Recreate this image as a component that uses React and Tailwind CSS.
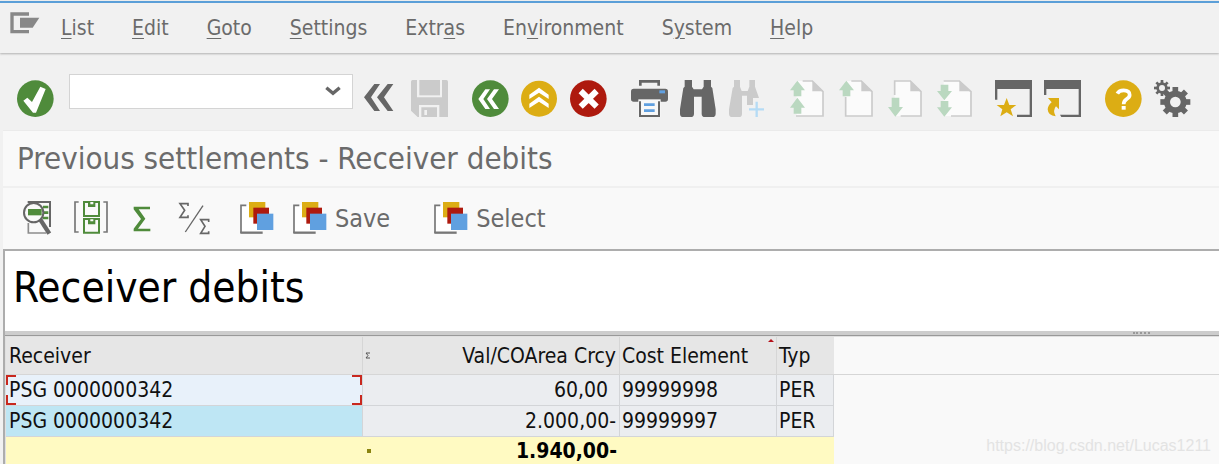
import { clsx } from 'clsx';

const MENU = [
    ['', 'L', 'ist'],
    ['', 'E', 'dit'],
    ['', 'G', 'oto'],
    ['', 'S', 'ettings'],
    ['Extr', 'a', 's'],
    ['En', 'v', 'ironment'],
    ['S', 'y', 'stem'],
    ['', 'H', 'elp'],
];

const ROWS = [
    { receiver: 'PSG 0000000342', value: '60,00', negative: false, element: '99999998', type: 'PER' },
    { receiver: 'PSG 0000000342', value: '2.000,00', negative: true, element: '99999997', type: 'PER' },
];

const GREEN = '#4f8b3b';
const AMBER = '#dcad14';
const RED = '#ae1a0e';
const DARK = '#666666';
const PALE = '#cbcbcb';
const BLUE = '#60a0e0';

// toolbar icons are drawn on a 111 unit grid
function Icon({ children }) {
    return (
        <svg viewBox="0 0 111 111" className="block size-[37px]" aria-hidden="true">
            {children}
        </svg>
    );
}

function SmallIcon({ children }) {
    return (
        <svg viewBox="0 0 105 105" className="block size-[35px] shrink-0" aria-hidden="true">
            {children}
        </svg>
    );
}

const AcceptIcon = () => (
    <Icon>
        <circle cx="55" cy="56" r="55" fill={GREEN} />
        <path d="M19 62L31 53L45 66L70 20L86 27L57 98H48Z" fill="#fff" />
    </Icon>
);

const CollapseIcon = () => (
    <Icon>
        <path d="M0 52L31 12H48L21 52L48 93H31ZM39 52L71 12H88L60 52L88 93H71Z" fill={DARK} />
    </Icon>
);

const SaveIcon = () => (
    <Icon>
        <path d="M5 0H18V52H93V0H106Q111 0 111 5V111H85V75H24V111H20L0 92V5Q0 0 5 0Z" fill={PALE} />
        <path d="M25 0H87V46H25Z" fill={PALE} />
        <path d="M31 82H78V111H31ZM40 90V105H48V90Z" fill={PALE} fillRule="evenodd" />
    </Icon>
);

const BackIcon = () => (
    <Icon>
        <circle cx="55" cy="56" r="55" fill={GREEN} />
        <path d="M19 57L40 28H54L34 57L54 87H40ZM45 57L66 28H81L60 57L81 87H66Z" fill="#fff" />
    </Icon>
);

const ExitIcon = () => (
    <Icon>
        <circle cx="54" cy="56" r="54" fill={AMBER} />
        <path d="M54 23L83 44V57L54 38L25 57V44ZM54 50L83 71V84L54 65L25 84V71Z" fill="#fff" />
    </Icon>
);

const CancelIcon = () => (
    <Icon>
        <circle cx="55" cy="56" r="55" fill={RED} />
        <path d="M32 33L80 80M80 33L32 80" stroke="#fff" strokeWidth="18" />
    </Icon>
);

const PrintIcon = () => (
    <Icon>
        <path d="M28 17V4H83V17" fill="none" stroke={DARK} strokeWidth="8" />
        <rect y="26" width="111" height="39" rx="8" fill={DARK} />
        <rect x="85" y="31" width="17" height="9" fill={BLUE} />
        <path d="M22 58H89V111H22Z" fill="#f8f8f8" />
        <path d="M27 64V108H84V64" fill="none" stroke={DARK} strokeWidth="6" />
        <path d="M39 74H71M39 92H71" stroke={BLUE} strokeWidth="8" />
    </Icon>
);

const FindIcon = () => (
    <Icon>
        <path
            d="M14 0H36V20L41 28H66L71 20V0H93V20L97 24L107 88V101Q107 111 97 111H75Q65 111 65 101V50H42V101Q42 111 32 111H10Q0 111 0 101V88L10 24L14 20Z"
            fill={DARK}
        />
    </Icon>
);

const FindNextIcon = () => (
    <Icon>
        <path
            d="M15 0H33V20L38 33H56L61 20V0H78V20L90 54H72V75H54V47H39V101Q39 111 30 111H10Q0 111 0 101V88L11 24L15 20Z"
            fill={PALE}
        />
        <path d="M83 65V111M60 88H105" stroke="#b5dbf5" strokeWidth="7" />
    </Icon>
);

function PageIcon({ outline, arrows }) {
    return (
        <svg viewBox="0 0 102 111" className="block h-[37px] w-[34px] overflow-visible" aria-hidden="true">
            <path d="M20 3H67L99 35V108H20Z" fill="#fbfbfb" />
            <path d={outline} fill="none" stroke={PALE} strokeWidth="5" />
            <path d="M67 2V34H100Z" fill={PALE} />
            {arrows.map(d => (
                <path key={d} d={d} fill="#bad8c0" />
            ))}
        </svg>
    );
}

const FirstPageIcon = () => (
    <PageIcon
        outline="M38 3H67L99 35V108H18"
        arrows={['M22 2L45 31H34V49H11V31H0Z', 'M22 53L45 83H34V101H11V83H0Z']}
    />
);
const PrevPageIcon = () => (
    <PageIcon outline="M37 3H67L99 35V108H20V51" arrows={['M22 2L45 31H34V49H11V31H0Z']} />
);
const NextPageIcon = () => (
    <PageIcon outline="M20 45V3H67L99 35V108H38" arrows={['M22 110L45 81H34V53H11V81H0Z']} />
);
const LastPageIcon = () => (
    <PageIcon
        outline="M20 3H67L102 35V108H42"
        arrows={['M22 61L45 33H34V14H11V33H0Z', 'M22 110L45 82H34V63H11V82H0Z']}
    />
);

const NewSessionIcon = () => (
    <Icon>
        <path d="M0 0H111V111H66V104H104V27H7V59H0Z" fill={DARK} />
        <path d="M35 54L43 75H64L47 88L54 109L35 97L16 109L22 88L5 75H27Z" fill={AMBER} />
    </Icon>
);

const ShortcutIcon = () => (
    <Icon>
        <path d="M0 0H111V111H52L48 104H104V27H7V45H0Z" fill={DARK} />
        <path d="M12 54H45V88L36 79Q25 92 35 109Q12 107 11 88Q12 76 23 67Z" fill={AMBER} />
    </Icon>
);

const HelpIcon = () => (
    <Icon>
        <circle cx="55" cy="56" r="55" fill={AMBER} />
        <path d="M37 41Q42 31 56 31Q74 31 74 45Q74 52 64 58Q56 63 56 73" fill="none" stroke="#fff" strokeWidth="11" />
        <rect x="50" y="78" width="12" height="11" fill="#fff" />
    </Icon>
);

function Gear({ cx, cy, body, hole, tooth, reach }) {
    return (
        <g transform={`translate(${cx} ${cy})`}>
            {[0, 45, 90, 135].map(a => (
                <rect key={a} x={-tooth / 2} y={-reach} width={tooth} height={reach * 2} fill={DARK} transform={`rotate(${a})`} />
            ))}
            <circle r={body} fill={DARK} />
            <circle r={hole} fill="#f1f1f1" />
        </g>
    );
}

const SettingsIcon = () => (
    <Icon>
        <Gear cx={64} cy={66} body={34} hole={16} tooth={17} reach={45} />
        <Gear cx={24} cy={24} body={17} hole={9} tooth={8} reach={24} />
    </Icon>
);

const TOOLBAR = [
    [['Save', SaveIcon]],
    [['Back', BackIcon], ['Exit', ExitIcon], ['Cancel', CancelIcon]],
    [['Print', PrintIcon], ['Find', FindIcon], ['Find next', FindNextIcon]],
    [['First page', FirstPageIcon], ['Previous page', PrevPageIcon], ['Next page', NextPageIcon], ['Last page', LastPageIcon]],
    [['New session', NewSessionIcon], ['Create shortcut', ShortcutIcon]],
    [['Help', HelpIcon], ['Customize layout', SettingsIcon]],
];

const DetailIcon = () => (
    <SmallIcon>
        <path d="M14 3H81V78" fill="none" stroke={DARK} strokeWidth="6" />
        <path d="M16 66V96H70" fill="none" stroke="#8c8c8c" strokeWidth="5" />
        <path d="M60 18H76M60 35H76M60 51H76" stroke={GREEN} strokeWidth="8" />
        <circle cx="32" cy="35" r="29" fill="#f9f9f9" stroke={DARK} strokeWidth="6" />
        <rect x="15" y="24" width="41" height="19" fill={GREEN} />
        <path d="M52 56L79 98" stroke={DARK} strokeWidth="13" />
    </SmallIcon>
);

const ColumnsIcon = () => (
    <SmallIcon>
        <path d="M14 3H3V93H14M88 3H99V93H88" fill="none" stroke="#777" strokeWidth="5" />
        <path d="M30 3H75V45H30ZM30 54H75V95H30Z" fill="#f9f9f9" stroke={GREEN} strokeWidth="6" />
        <path d="M42 3H64V18H42ZM42 54H64V70H42Z" fill={GREEN} />
        <path d="M49 3H58V10H49ZM49 55H58V61H49Z" fill="#f9f9f9" />
    </SmallIcon>
);

const SumIcon = () => (
    <SmallIcon>
        <path d="M26 17H75V25H41L61 53L39 83H76V91H26V83L48 54L26 25Z" fill={GREEN} />
    </SmallIcon>
);

const SubtotalIcon = () => (
    <SmallIcon>
        <path d="M36 15V8H12L26 28L12 49H36V43" fill="none" stroke={DARK} strokeWidth="5" />
        <path d="M98 63V56H74L87 76L74 97H98V91" fill="none" stroke={DARK} strokeWidth="5" />
        <path d="M28 93L81 14" stroke={DARK} strokeWidth="4" />
    </SmallIcon>
);

const LayoutIcon = () => (
    <SmallIcon>
        <path d="M3 12H30V96H3Z" fill="#fff" />
        <path d="M30 45H68V96H30Z" fill="#fff" />
        <path d="M19 13H3V96" fill="none" stroke="#777" strokeWidth="5" />
        <path d="M1 95H68" stroke="#777" strokeWidth="7" />
        <rect x="27" y="3" width="49" height="46" fill={AMBER} />
        <rect x="40" y="20" width="47" height="48" fill={RED} />
        <rect x="51" y="38" width="49" height="49" fill={BLUE} />
    </SmallIcon>
);

function MenuBar() {
    return (
        <nav className="relative z-10 flex h-[52px] items-center border-t-2 border-[#5b9fd8] bg-[#f1f1f1] pl-[10px] shadow-[0_1px_2px_#b0b0b0]">
            <button type="button" aria-label="Window menu" className="mr-[21px] mb-[10px]">
                <svg viewBox="0 0 90 66" className="block h-[22px] w-[30px]" aria-hidden="true">
                    <path d="M57 6H6V59H57" fill="none" stroke="#888" strokeWidth="10" />
                    <path d="M30 17H88L68 47H30Z" fill="#888" />
                </svg>
            </button>
            <div className="flex gap-[38px]">
                {MENU.map(([before, key, after]) => (
                    <button key={before + key + after} type="button" className="text-[21px] leading-7 text-[#6b6b6b]">
                        {before}
                        <span className="underline decoration-1 underline-offset-3">{key}</span>
                        {after}
                    </button>
                ))}
            </div>
        </nav>
    );
}

function Toolbar() {
    return (
        <div className="flex h-[77px] items-center bg-[#f1f1f1] pt-[13px] pl-[17px]">
            <button type="button" aria-label="Enter"><AcceptIcon /></button>
            <div className="relative mb-[13px] ml-[15px]">
                <select aria-label="Command" className="block h-[35px] w-[284px] appearance-none border border-[#d4d4d4] bg-white" />
                <svg viewBox="0 0 48 30" className="pointer-events-none absolute top-3 right-3 h-[10px] w-4" aria-hidden="true">
                    <path d="M4 5L24 22L44 5" fill="none" stroke={DARK} strokeWidth="10" />
                </svg>
            </div>
            <button type="button" aria-label="Collapse" className="ml-[11px]"><CollapseIcon /></button>
            <div className="ml-[10px] flex gap-6">
                {TOOLBAR.map((group, i) => (
                    <div key={i} className={clsx('flex', group.length === 4 ? 'gap-[15px]' : 'gap-3')}>
                        {group.map(([label, Glyph]) => (
                            <button key={label} type="button" aria-label={label}><Glyph /></button>
                        ))}
                    </div>
                ))}
            </div>
        </div>
    );
}

function ListToolbar() {
    return (
        <div className="flex h-[61px] items-center bg-[#f9f9f9] pl-5 text-[25px] text-[#6b6b6b]">
            <div className="flex gap-4">
                <button type="button" aria-label="Details"><DetailIcon /></button>
                <button type="button" aria-label="Columns"><ColumnsIcon /></button>
                <button type="button" aria-label="Total"><SumIcon /></button>
                <button type="button" aria-label="Subtotal"><SubtotalIcon /></button>
            </div>
            <button type="button" aria-label="Change layout" className="ml-[29px]"><LayoutIcon /></button>
            <button type="button" className="ml-[18px] flex items-center gap-[7px]"><LayoutIcon />Save</button>
            <button type="button" className="ml-11 flex items-center gap-[7px]"><LayoutIcon />Select</button>
        </div>
    );
}

// red corner marks round the active cell
function CellCursor() {
    return (
        <span className="pointer-events-none absolute inset-0" aria-hidden="true">
            <span className="absolute top-0 left-0 size-[10px] border-t-2 border-l-2 border-[#c8281e]" />
            <span className="absolute top-0 right-0 size-[10px] border-t-2 border-r-2 border-[#c8281e]" />
            <span className="absolute bottom-0 left-0 size-[10px] border-b-2 border-l-2 border-[#c8281e]" />
            <span className="absolute right-0 bottom-0 size-[10px] border-r-2 border-b-2 border-[#c8281e]" />
        </span>
    );
}

function DebitTable() {
    return (
        <table className="w-full table-fixed border-separate border-spacing-0 text-[21px] leading-6 text-[#111]">
            <colgroup>
                <col className="w-[357px]" />
                <col className="w-[257px]" />
                <col className="w-[157px]" />
                <col className="w-[57px]" />
                <col />
            </colgroup>
            <thead>
                <tr className="h-[38px] text-left *:border-b *:border-[#d6d6d6] *:p-0 *:font-normal">
                    <th className="border-r bg-[#e6e6e6]"><span className="pl-[3px]">Receiver</span></th>
                    <th className="border-r bg-[#e6e6e6]">
                        <div className="flex items-center justify-between pr-[3px] pl-[2px]">
                            <svg viewBox="0 0 5 7" className="h-[7px] w-[5px]" aria-hidden="true">
                                <path d="M5 1H1L3 3.5L1 6H5" fill="none" stroke="#555" />
                            </svg>
                            Val/COArea Crcy
                        </div>
                    </th>
                    <th className="relative border-r bg-[#e6e6e6]">
                        <span className="pl-[2px]">Cost Element</span>
                        <svg viewBox="0 0 6 3" className="absolute top-[2px] right-[2px] h-[3px] w-[6px]" aria-hidden="true">
                            <path d="M0 3L3 0L6 3Z" fill="#b5121b" />
                        </svg>
                    </th>
                    <th className="bg-[#e6e6e6]"><span className="pl-[2px]">Typ</span></th>
                    <td />
                </tr>
            </thead>
            <tbody>
                {ROWS.map((row, i) => (
                    <tr key={row.element} className="h-[31px] *:border-[#d3d5d8] *:p-0">
                        <td className={clsx('relative border-r border-b', i === 0 ? 'bg-[#e8f1fa]' : 'bg-[#bee6f4]')}>
                            <span className="pl-[3px]">{row.receiver}</span>
                            {i === 0 && <CellCursor />}
                        </td>
                        <td className="border-r border-b bg-[#ebedf0] text-right">
                            <span className={row.negative ? 'pr-[3px]' : 'pr-[11px]'}>{row.value}{row.negative && '-'}</span>
                        </td>
                        <td className="border-r border-b bg-[#ebedf0]"><span className="pl-[2px]">{row.element}</span></td>
                        <td className="border-r border-b bg-[#ebedf0]"><span className="pl-[2px]">{row.type}</span></td>
                        <td />
                    </tr>
                ))}
                <tr className="h-[27px] bg-[#fffac2] *:p-0">
                    <td />
                    <td className="font-bold text-black">
                        <div className="flex items-center justify-between pr-[3px] pl-1">
                            <span className="size-1 bg-[#8a8410]" />
                            1.940,00-
                        </div>
                    </td>
                    <td colSpan={2} />
                    <td className="bg-[#f9f9f9]" />
                </tr>
            </tbody>
        </table>
    );
}

export default function App() {
    return (
        <div className="relative overflow-hidden bg-[#f1f1f1] pt-px font-['DejaVu_Sans_Condensed','Noto_Sans',sans-serif]">
            <MenuBar />
            <Toolbar />
            <main className="ml-[3px] border-t border-[#ebebeb] bg-[#f9f9f9]">
                <h1 className="flex h-[57px] items-center border-b-2 border-[#f0f0f0] pl-[14px] text-[31px] text-[#6b6b6b]">
                    Previous settlements - Receiver debits
                </h1>
                <ListToolbar />
                <div className="border-t-2 border-l-2 border-[#adadad]">
                    <h2 className="flex h-20 items-center bg-white pb-2 pl-2 text-[42px] text-black">Receiver debits</h2>
                    <div className="flex h-[5px] justify-end border-b border-[#999] bg-[#cdcdcd] pr-[69px]">
                        <span className="mt-px h-[2px] w-[17px] border-b-2 border-dotted border-[#999]" />
                    </div>
                    <div className="border-t border-l border-[#e0e0e0]">
                        <DebitTable />
                    </div>
                </div>
            </main>
            <p className="absolute right-2 bottom-2 font-['Liberation_Sans',sans-serif] text-base leading-5 text-[#e3e3e3]">
                https://blog.csdn.net/Lucas1211
            </p>
        </div>
    );
}
